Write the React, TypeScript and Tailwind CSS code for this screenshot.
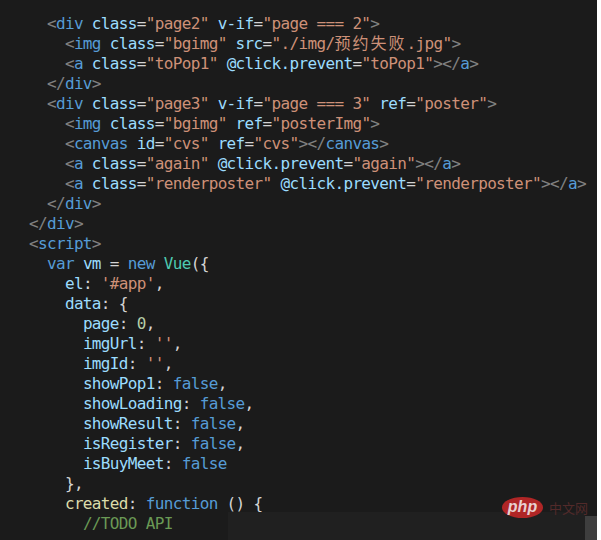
import React from 'react';

type Tok = [keyof typeof COLORS, string];

// VS Code dark+ token colours
const COLORS = {
  p: 'text-[#808080]', // tag brackets
  t: 'text-[#569cd6]', // tag names
  a: 'text-[#9cdcfe]', // attributes / properties
  s: 'text-[#ce9178]', // strings
  w: 'text-[#d4d4d4]', // plain punctuation
  k: 'text-[#569cd6]', // keywords
  c: 'text-[#4ec9b0]', // class names
  n: 'text-[#b5cea8]', // numbers
  f: 'text-[#dcdcaa]', // function names
  m: 'text-[#6a9955]', // comments
  z: 'text-[#ce9178] tracking-[2px]', // cjk in strings
};

const attr = (name: string, value: string): Tok[] => [
  ['w', ' '],
  ['a', name],
  ['w', '='],
  ['s', `"${value}"`],
];

const LINES: Tok[][] = [
  [['w', '    '], ['p', '<'], ['t', 'div'], ...attr('class', 'page2'), ...attr('v-if', 'page === 2'), ['p', '>']],
  [
    ['w', '      '], ['p', '<'], ['t', 'img'], ...attr('class', 'bgimg'),
    ['w', ' '], ['a', 'src'], ['w', '='], ['s', '"./img/'], ['z', '预约失败'], ['s', '.jpg"'], ['p', '>'],
  ],
  [['w', '      '], ['p', '<'], ['t', 'a'], ...attr('class', 'toPop1'), ...attr('@click.prevent', 'toPop1'), ['p', '></'], ['t', 'a'], ['p', '>']],
  [['w', '    '], ['p', '</'], ['t', 'div'], ['p', '>']],
  [['w', '    '], ['p', '<'], ['t', 'div'], ...attr('class', 'page3'), ...attr('v-if', 'page === 3'), ...attr('ref', 'poster'), ['p', '>']],
  [['w', '      '], ['p', '<'], ['t', 'img'], ...attr('class', 'bgimg'), ...attr('ref', 'posterImg'), ['p', '>']],
  [['w', '      '], ['p', '<'], ['t', 'canvas'], ...attr('id', 'cvs'), ...attr('ref', 'cvs'), ['p', '></'], ['t', 'canvas'], ['p', '>']],
  [['w', '      '], ['p', '<'], ['t', 'a'], ...attr('class', 'again'), ...attr('@click.prevent', 'again'), ['p', '></'], ['t', 'a'], ['p', '>']],
  [['w', '      '], ['p', '<'], ['t', 'a'], ...attr('class', 'renderposter'), ...attr('@click.prevent', 'renderposter'), ['p', '></'], ['t', 'a'], ['p', '>']],
  [['w', '    '], ['p', '</'], ['t', 'div'], ['p', '>']],
  [['w', '  '], ['p', '</'], ['t', 'div'], ['p', '>']],
  [['w', '  '], ['p', '<'], ['t', 'script'], ['p', '>']],
  [['w', '    '], ['k', 'var'], ['w', ' '], ['a', 'vm'], ['w', ' = '], ['k', 'new'], ['w', ' '], ['c', 'Vue'], ['w', '({']],
  [['w', '      '], ['a', 'el'], ['w', ': '], ['s', "'#app'"], ['w', ',']],
  [['w', '      '], ['a', 'data'], ['w', ': {']],
  [['w', '        '], ['a', 'page'], ['w', ': '], ['n', '0'], ['w', ',']],
  [['w', '        '], ['a', 'imgUrl'], ['w', ': '], ['s', "''"], ['w', ',']],
  [['w', '        '], ['a', 'imgId'], ['w', ': '], ['s', "''"], ['w', ',']],
  [['w', '        '], ['a', 'showPop1'], ['w', ': '], ['k', 'false'], ['w', ',']],
  [['w', '        '], ['a', 'showLoading'], ['w', ': '], ['k', 'false'], ['w', ',']],
  [['w', '        '], ['a', 'showResult'], ['w', ': '], ['k', 'false'], ['w', ',']],
  [['w', '        '], ['a', 'isRegister'], ['w', ': '], ['k', 'false'], ['w', ',']],
  [['w', '        '], ['a', 'isBuyMeet'], ['w', ': '], ['k', 'false']],
  [['w', '      },']],
  [['w', '      '], ['f', 'created'], ['w', ': '], ['k', 'function'], ['w', ' () {']],
  [['w', '        '], ['m', '//TODO API']],
];

const Watermark = () => (
  <div className="absolute left-[502px] top-[497px] flex items-center gap-[6px]">
    <div className="w-[41px] h-[21px] rounded-[50%] bg-[#b02626] flex items-center justify-center">
      <span className="text-[#e8d0d0] text-[16px] italic font-bold leading-none font-['Liberation_Sans',sans-serif] -mt-[2px]">
        php
      </span>
    </div>
    <span className="text-[#522a2a] text-[13px] leading-none font-['Noto_Sans_CJK_SC',sans-serif]">中文网</span>
  </div>
);

export default function App() {
  return (
    <div className="w-[601px] h-[540px] flex bg-white overflow-hidden">
      <div className="relative w-[597px] h-full bg-[#1b1b1b] overflow-hidden">
        <pre className="pt-[14px] pl-[11px] text-[16px] tracking-[-0.65px] leading-[20px] whitespace-pre font-['DejaVu_Sans_Mono','Noto_Sans_CJK_SC',monospace]">
          {LINES.map((line, i) => (
            <div key={i}>
              {line.map(([k, text], j) => (
                <span key={j} className={COLORS[k]}>
                  {text}
                </span>
              ))}
            </div>
          ))}
        </pre>

        {/* compression blocks round the watermark */}
        <div className="absolute left-[228px] top-[512px] w-[357px] h-[28px] bg-[#202020]" />
        <div className="absolute left-[585px] top-[516px] w-[12px] h-[24px] bg-[#3e3e3e]" />
        <Watermark />
      </div>
      <div className="w-[4px] h-full bg-white" />
    </div>
  );
}
